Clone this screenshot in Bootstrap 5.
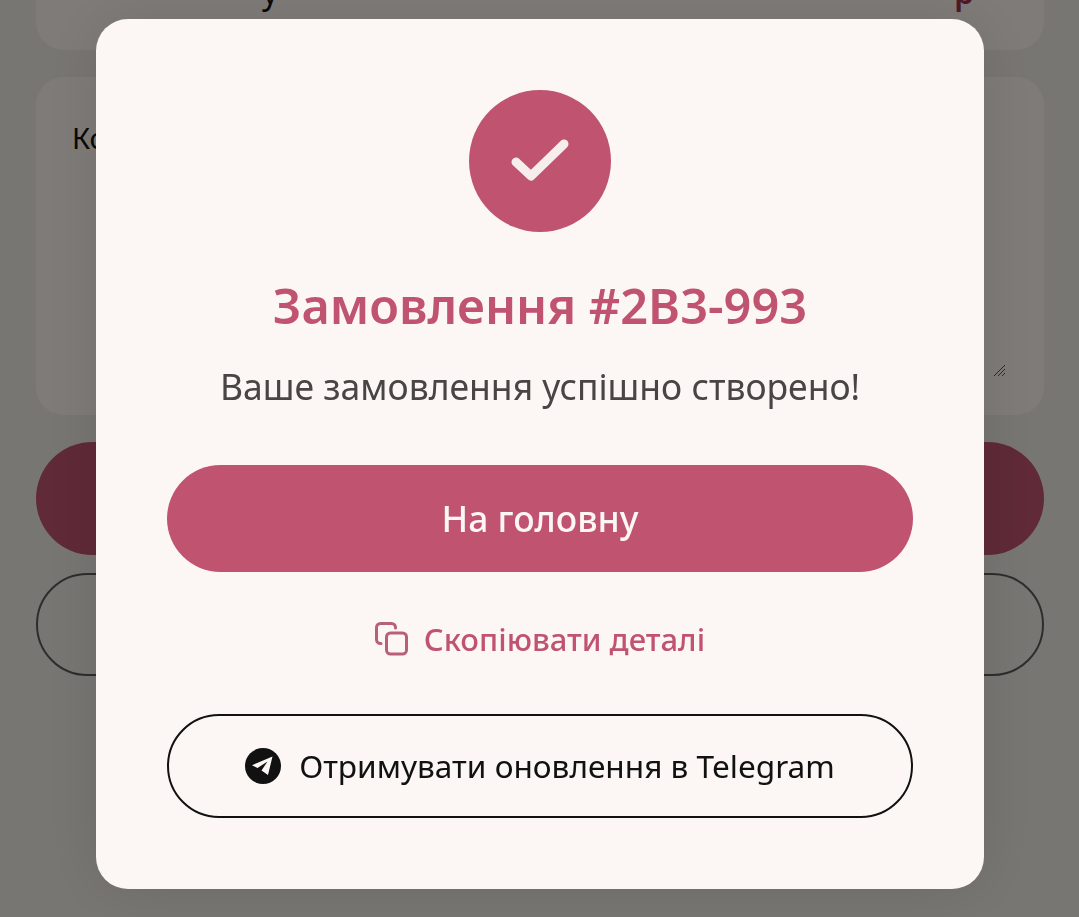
<!DOCTYPE html>
<html lang="uk">
<head>
    <meta charset="UTF-8">
    <meta name="viewport" content="width=device-width, initial-scale=1.0">
    <title>Замовлення</title>
    <link rel="stylesheet" href="https://cdn.jsdelivr.net/npm/bootstrap@5.3.0/dist/css/bootstrap.min.css">
    <style>
        html, body { height: 100%; }
        body {
            font-family: "Noto Sans", sans-serif;
            background: #eeece5;
            overflow: hidden;
        }
        .page-back {
            padding: 0 35px 0 36px;
            margin-top: -60px;
        }
        .back-box {
            border-radius: 28px;
            background-color: #fef6f3;
        }
        .box-top {
            height: 110px;
            margin-bottom: 27px;
            padding: 0 70px 42px 226px;
            font-size: 32px;
            line-height: 1;
            color: #111;
        }
        .back-price { color: #a3324f; font-weight: 600; }
        .box-comment { height: 338px; padding: 44px 36px; font-size: 29px; line-height: 1.2; color: #111; position: relative; margin-bottom: 27px; }
        .resize-mark { position: absolute; right: 38px; bottom: 38px; width: 13px; height: 13px; }
        .back-primary { height: 113px; background: #c05470; border-radius: 57px; margin-bottom: 18px; }
        .back-outline { height: 103px; border: 2px solid #5c5a5a; border-radius: 52px; }
        .dim-layer {
            position: fixed;
            inset: 0;
            background: rgba(0, 0, 0, .5);
        }
        .order-dialog {
            position: fixed;
            left: 96px;
            top: 19px;
            width: 888px;
            height: 870px;
            background: #fcf7f5;
            border-radius: 32px;
            padding: 71px 71px 0;
            box-shadow: 0 0 60px rgba(0, 0, 0, .1);
        }
        .ok-circle {
            width: 142px;
            height: 142px;
            background: #c05470;
        }
        .order-title {
            font-size: 48.7px;
            line-height: 62px;
            font-weight: 600;
            color: #c05470;
            margin-top: 42px;
            margin-bottom: 0;
        }
        .order-sub {
            font-size: 35.5px;
            line-height: 46px;
            color: #4a4545;
            margin-top: 27px;
            margin-bottom: 0;
        }
        .btn-home {
            height: 107px;
            margin-top: 56px;
            background: #c05470;
            border: 0;
            border-radius: 54px;
            color: #fcf7f5;
            font-size: 35.5px;
            font-weight: 500;
        }
        .btn-home:hover { background: #c05470; color: #fcf7f5; }
        .copy-link {
            margin-top: 44px;
            height: 46px;
            color: #c05470;
            font-size: 31px;
            font-weight: 500;
            gap: 16px;
        }
        .btn-telegram {
            height: 104px;
            margin-top: 52px;
            border: 2px solid #111;
            border-radius: 52px;
            background: transparent;
            color: #111;
            font-size: 31.6px;
            font-weight: 400;
            gap: 18px;
        }
    </style>
</head>
<body>
    <div class="page-back">
        <div class="back-box box-top d-flex justify-content-between align-items-end"><span>у</span><span class="back-price">р</span></div>
        <div class="back-box box-comment">
            Коментар
            <svg class="resize-mark" viewBox="0 0 13 13" fill="none" stroke="#555" stroke-width="1"><path d="M1 12 12 1M5 12l7-7M9 12l3-3"/></svg>
        </div>
        <div class="back-primary"></div>
        <div class="back-outline"></div>
    </div>
    <div class="dim-layer"></div>

    <div class="order-dialog d-flex flex-column align-items-stretch text-center">
        <div class="ok-circle rounded-circle d-flex align-items-center justify-content-center align-self-center">
            <svg width="60" height="46" viewBox="0 0 60 46" fill="none" stroke="#f6eeec" stroke-width="9" stroke-linecap="round" stroke-linejoin="round"><path d="M6 24 21 38 54 6"/></svg>
        </div>
        <h2 class="order-title">Замовлення #2B3-993</h2>
        <p class="order-sub">Ваше замовлення успішно створено!</p>
        <button class="btn btn-home w-100" type="button">На головну</button>
        <div class="copy-link d-flex align-items-center justify-content-center">
            <svg width="33" height="34" viewBox="0 0 33 34" fill="none" stroke="#b8607a" stroke-width="3" stroke-linecap="round"><rect x="11.5" y="11" width="20" height="21" rx="4"/><path d="M6 21.5H5.5a4 4 0 0 1-4-4V5.500a4 4 0 0 1 4-4h11a4 4 0 0 1 4 4v.5"/></svg>
            <span>Скопіювати деталі</span>
        </div>
        <button class="btn btn-telegram w-100 d-flex align-items-center justify-content-center" type="button">
            <svg width="36" height="36" viewBox="0 0 36 36"><circle cx="18" cy="18" r="18" fill="#111"/><path d="M7 17.200 27.500 8.500 23 27 16.500 22.500 22.500 13.500 12.500 20z" fill="#fcf7f5"/></svg>
            <span>Отримувати оновлення в Telegram</span>
        </button>
    </div>
</body>
</html>
